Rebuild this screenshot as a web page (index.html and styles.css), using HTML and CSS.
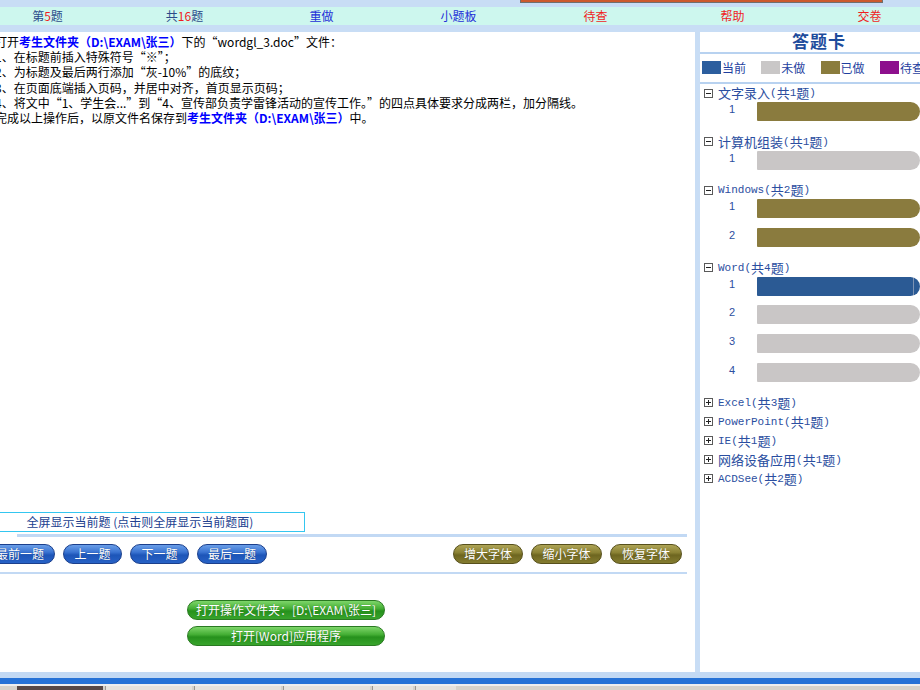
FILE: index.html
```html
<!DOCTYPE html>
<html lang="zh-CN">
<head>
<meta charset="utf-8">
<title>答题</title>
<link rel="stylesheet" href="styles.css">
</head>
<body>
<div class="page">
  <header class="topbar">
    <div class="topbar-row">
      <div class="tcell t-dark">第<span class="t-red">5</span>题</div>
      <div class="tcell t-dark">共<span class="t-red">16</span>题</div>
      <div class="tcell t-blue">重做</div>
      <div class="tcell t-blue">小题板</div>
      <div class="tcell t-red">待查</div>
      <div class="tcell t-red">帮助</div>
      <div class="tcell t-red">交卷</div>
    </div>
    <div class="topbox"></div>
  </header>

  <div class="main">
    <section class="left">
      <div class="question">
        <p>打开<b class="hl">考生文件夹（D:\EXAM\张三）</b>下的“wordgl_3.doc”文件：</p>
        <p>1、在标题前插入特殊符号“※”；</p>
        <p>2、为标题及最后两行添加“灰-10%”的底纹；</p>
        <p>3、在页面底端插入页码，并居中对齐，首页显示页码；</p>
        <p>4、将文中“1、学生会...”到“4、宣传部负责学雷锋活动的宣传工作。”的四点具体要求分成两栏，加分隔线。</p>
        <p>完成以上操作后，以原文件名保存到<b class="hl">考生文件夹（D:\EXAM\张三）</b>中。</p>
      </div>

      <div class="controls">
        <div class="fullscreen">全屏显示当前题 (点击则全屏显示当前题面)</div>
        <div class="hline hline-top"></div>
        <div class="navrow">
          <div class="btns">
            <span class="pill pill-blue w70">最前一题</span>
            <span class="pill pill-blue w59">上一题</span>
            <span class="pill pill-blue w59">下一题</span>
            <span class="pill pill-blue w70">最后一题</span>
          </div>
          <div class="btns">
            <span class="pill pill-olive w70">增大字体</span>
            <span class="pill pill-olive w71">缩小字体</span>
            <span class="pill pill-olive w72">恢复字体</span>
          </div>
        </div>
        <div class="hline hline-bottom"></div>
        <div class="opens">
          <span class="pill pill-green">打开操作文件夹：[D:\EXAM\张三]</span>
          <span class="pill pill-green">打开[Word]应用程序</span>
        </div>
      </div>
    </section>

    <div class="vdivider"></div>

    <aside class="card">
      <h2 class="card-title">答题卡</h2>
      <div class="cline"></div>
      <div class="legend">
        <span class="lg"><i class="sw sw-cur"></i>当前</span>
        <span class="lg"><i class="sw sw-todo"></i>未做</span>
        <span class="lg"><i class="sw sw-done"></i>已做</span>
        <span class="lg"><i class="sw sw-mark"></i>待查</span>
      </div>
      <div class="cline"></div>

      <div class="tree">
        <div class="group">
          <div class="th"><i class="tog"></i>文字录入<span class="m">(</span>共<span class="m">1</span>题<span class="m">)</span></div>
          <div class="item"><span class="num">1</span><span class="bar bar-done"></span></div>
        </div>
        <div class="group">
          <div class="th"><i class="tog"></i>计算机组装<span class="m">(</span>共<span class="m">1</span>题<span class="m">)</span></div>
          <div class="item"><span class="num">1</span><span class="bar bar-todo"></span></div>
        </div>
        <div class="group">
          <div class="th"><i class="tog"></i><span class="m">Windows(</span>共<span class="m">2</span>题<span class="m">)</span></div>
          <div class="item"><span class="num">1</span><span class="bar bar-done"></span></div>
          <div class="item"><span class="num">2</span><span class="bar bar-done"></span></div>
        </div>
        <div class="group">
          <div class="th"><i class="tog"></i><span class="m">Word(</span>共<span class="m">4</span>题<span class="m">)</span></div>
          <div class="item"><span class="num">1</span><span class="bar bar-cur"></span></div>
          <div class="item"><span class="num">2</span><span class="bar bar-todo"></span></div>
          <div class="item"><span class="num">3</span><span class="bar bar-todo"></span></div>
          <div class="item"><span class="num">4</span><span class="bar bar-todo"></span></div>
        </div>
        <div class="group">
          <div class="th"><i class="tog tog-plus"></i><span class="m">Excel(</span>共<span class="m">3</span>题<span class="m">)</span></div>
        </div>
        <div class="group">
          <div class="th"><i class="tog tog-plus"></i><span class="m">PowerPoint(</span>共<span class="m">1</span>题<span class="m">)</span></div>
        </div>
        <div class="group">
          <div class="th"><i class="tog tog-plus"></i><span class="m">IE(</span>共<span class="m">1</span>题<span class="m">)</span></div>
        </div>
        <div class="group">
          <div class="th"><i class="tog tog-plus"></i>网络设备应用<span class="m">(</span>共<span class="m">1</span>题<span class="m">)</span></div>
        </div>
        <div class="group">
          <div class="th"><i class="tog tog-plus"></i><span class="m">ACDSee(</span>共<span class="m">2</span>题<span class="m">)</span></div>
        </div>
      </div>
    </aside>
  </div>

  <footer class="bottom">
    <div class="b-light"></div>
    <div class="b-blue"></div>
    <div class="b-gap"></div>
    <div class="taskbar">
      <span class="task task-active"></span>
      <span class="task"></span>
      <span class="task"></span>
      <span class="task"></span>
      <span class="task task-small"></span>
      <span class="task task-small"></span>
    </div>
  </footer>
</div>
</body>
</html>
```

FILE: styles.css
```css
html, body {
  margin: 0;
  padding: 0;
  overflow: hidden;
  background: #ffffff;
}

body {
  font-family: "Noto Sans CJK SC", "Noto Sans", sans-serif;
  color: #000;
}

.page {
  width: 920px;
  height: 690px;
  overflow: hidden;
  display: flex;
  flex-direction: column;
  position: relative;
}

/* ---------- top bar ---------- */
.topbar {
  flex: none;
  height: 32px;
  box-sizing: border-box;
  padding-top: 7px;
  background: #c8ddf5;
  position: relative;
}

.topbar-row {
  display: flex;
  width: 959px;
  height: 18px;
  margin-left: -21px;
  background: #cdf7ee;
}

.tcell {
  flex: 0 0 137px;
  text-align: center;
  font-size: 12px;
  line-height: 18px;
  white-space: nowrap;
}

.t-dark { color: #2b4a8a; }
.t-blue { color: #2430d8; }
.t-red  { color: #f01e1e; }

.topbox {
  position: absolute;
  left: 520px;
  top: 0;
  width: 363px;
  height: 3px;
  box-sizing: border-box;
  background: #cc5a2e;
  border: 1px solid #6f6f6f;
  border-top: 0;
}

/* ---------- main ---------- */
.main {
  flex: 1;
  min-height: 0;
  display: flex;
}

.left {
  flex: none;
  width: 695px;
  display: flex;
  flex-direction: column;
  padding-bottom: 26px;
  box-sizing: border-box;
  overflow: hidden;
}

.question {
  padding-top: 2px;
  margin-left: -5px;
  font-size: 12px;
  line-height: 15.2px;
}

.question p {
  margin: 0;
  white-space: nowrap;
}

.hl {
  color: #0000ff;
  font-weight: bold;
}

.controls {
  margin-top: auto;
  display: flex;
  flex-direction: column;
}

.fullscreen {
  width: 330px;
  height: 20px;
  margin-left: -25px;
  box-sizing: border-box;
  border: 1px solid #34c6f0;
  text-align: center;
  font-size: 12px;
  line-height: 18px;
  color: #22418f;
  white-space: nowrap;
}

.hline {
  background: #c2d9f4;
}

.hline-top {
  height: 3px;
  margin: 2px 8px 0 17px;
}

.hline-bottom {
  height: 2px;
  margin: 8px 8px 0 0;
}

.navrow {
  margin-top: 7px;
  margin-left: -15px;
  padding-right: 13px;
  height: 20px;
  display: flex;
  justify-content: space-between;
}

.btns {
  display: flex;
  gap: 8px;
}

.pill {
  display: block;
  height: 20px;
  box-sizing: border-box;
  border-radius: 10px;
  color: #ffffff;
  font-size: 12px;
  line-height: 18px;
  text-align: center;
  white-space: nowrap;
  text-shadow: 0 0 1px rgba(0, 0, 0, 0.35);
}

.w59 { width: 59px; }
.w70 { width: 70px; }
.w71 { width: 71px; }
.w72 { width: 72px; }

.pill-blue {
  background: linear-gradient(#6a9ee8 0%, #3a74d2 40%, #1d55b8 56%, #2762c6 100%);
  border: 1px solid #1b3f8c;
}

.pill-olive {
  background: linear-gradient(#aea456 0%, #8b8234 42%, #6e6620 56%, #847c30 100%);
  border: 1px solid #57501c;
}

.pill-green {
  width: 198px;
  background: linear-gradient(#7ed66a 0%, #44ae34 42%, #26911c 56%, #38a42c 100%);
  border: 1px solid #2a7a22;
}

.opens {
  margin-top: 26px;
  margin-left: 187px;
  display: flex;
  flex-direction: column;
  gap: 6px;
}

.vdivider {
  flex: none;
  width: 5px;
  background: #c8ddf5;
}

/* ---------- answer card ---------- */
.card {
  flex: 1;
  min-width: 0;
  display: flex;
  flex-direction: column;
}

.card-title {
  margin: 0;
  padding-left: 18px;
  height: 18px;
  font-size: 17px;
  line-height: 18px;
  letter-spacing: 1px;
  font-weight: bold;
  text-align: center;
  color: #1e4c9c;
}

.cline {
  height: 2px;
  margin-top: 2px;
  background: #b8d2f0;
}

.legend + .cline {
  margin-top: 8px;
}

.legend {
  margin-top: 7px;
  padding-left: 2px;
  height: 13px;
  display: flex;
  white-space: nowrap;
}

.lg {
  flex: 0 0 59.3px;
  display: flex;
  align-items: center;
  font-size: 12px;
  line-height: 13px;
  color: #1f3f9f;
}

.sw {
  flex: none;
  width: 19px;
  height: 13px;
  margin-right: 1px;
}

.sw-cur  { background: #2c5e9e; }
.sw-todo { background: #c9c7c7; }
.sw-done { background: #8a7c3d; }
.sw-mark { background: #8d0f8d; }

.tree {
  margin-top: 1px;
}

.group {
  padding-bottom: 3px;
}

.th {
  height: 16px;
  margin-bottom: 1px;
  display: flex;
  align-items: center;
  padding-left: 4px;
  font-size: 13px;
  line-height: 16px;
  color: #2b4ea0;
  white-space: nowrap;
}

.group:not(:has(.item)) .th {
  margin-bottom: 0;
}

.m {
  font-family: "Liberation Mono", "DejaVu Sans Mono", monospace;
  font-size: 11px;
}

.tog {
  flex: none;
  position: relative;
  width: 9px;
  height: 9px;
  box-sizing: border-box;
  border: 1px solid #5a5a5a;
  background: #ffffff;
  margin-right: 5px;
}

.tog::before {
  content: "";
  position: absolute;
  left: 1px;
  top: 3px;
  width: 5px;
  height: 1px;
  background: #222;
}

.tog-plus::after {
  content: "";
  position: absolute;
  left: 3px;
  top: 1px;
  width: 1px;
  height: 5px;
  background: #222;
}

.item {
  display: flex;
  height: 19px;
  margin: 0 0 9.7px 0;
  padding-left: 29px;
}

.num {
  flex: none;
  width: 28px;
  font-family: "Liberation Sans", sans-serif;
  font-size: 11px;
  line-height: 14px;
  color: #2d4f9f;
}

.bar {
  flex: 1;
  height: 19px;
  border-radius: 1px 10px 10px 1px;
}

.bar-done { background: #8a7b3e; }
.bar-todo { background: #c9c6c6; }
.bar-cur {
  background: linear-gradient(to left, #2b5a94 0, #2b5a94 6px, #7d93b4 6px, #7d93b4 7px, #2b5a94 7px);
}

/* ---------- bottom ---------- */
.bottom {
  flex: none;
  height: 18px;
  display: flex;
  flex-direction: column;
}

.b-light { height: 6px; background: #c2d9f4; }
.b-blue  { height: 6px; background: #2672d6; }
.b-gap   { height: 2px; background: #eeeeee; }

.taskbar {
  height: 4px;
  display: flex;
  gap: 2px;
  padding-left: 17px;
  background: #d6d2ca;
}

.task {
  width: 86px;
  height: 4px;
  background: #e6e2dc;
  border-left: 1px solid #9a9690;
}

.task-active {
  background: #574846;
  border-left: 0;
}

.task-small {
  width: 40px;
}
```
